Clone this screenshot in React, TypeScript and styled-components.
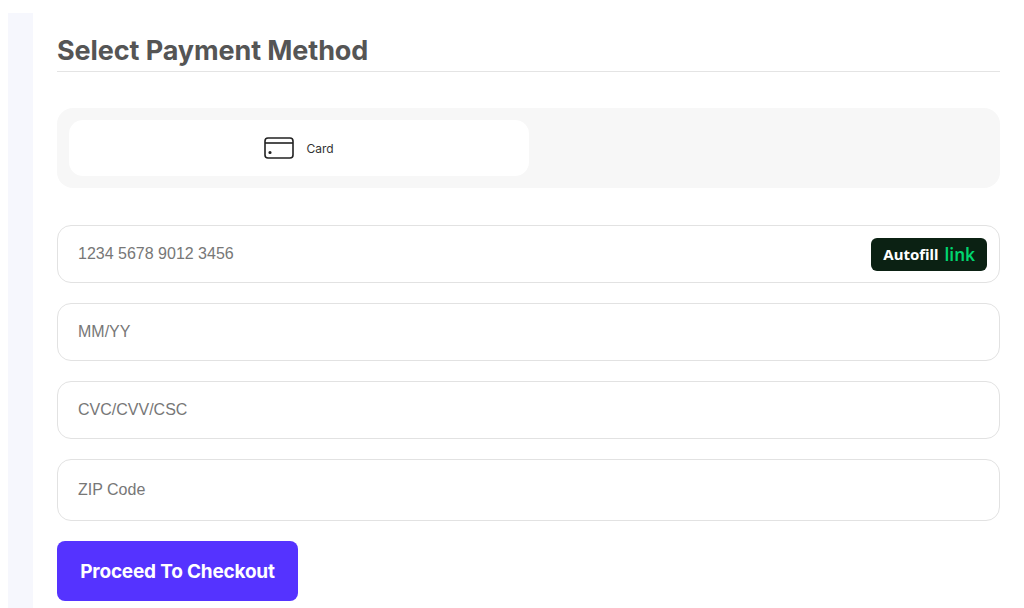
import React from "react";
import styled, { createGlobalStyle } from "styled-components";

const Global = createGlobalStyle`
  html, body { margin: 0; padding: 0; background: #fff; font-family: Inter, "Liberation Sans", sans-serif; }
`;

const Page = styled.div`
  display: flex;
  height: 608px;
  overflow: hidden;
  padding-top: 13px;
  box-sizing: border-box;
`;

const Side = styled.div`
  width: 25px;
  margin-left: 8px;
  background: #f6f7fd;
  flex-shrink: 0;
`;

const Main = styled.div`
  width: 943px;
  margin-left: 24px;
  display: flex;
  flex-direction: column;
`;

const Title = styled.h2`
  margin: 0;
  padding-top: 22px;
  padding-bottom: 4px;
  font-size: 27px;
  font-weight: 700;
  letter-spacing: -0.1px;
  color: #555;
  border-bottom: 1px solid #e4e4e4;
  line-height: 32px;
`;

const Tabs = styled.div`
  margin-top: 36px;
  background: #f7f7f7;
  border-radius: 16px;
  padding: 12px;
  height: 56px;
  display: flex;
`;

const Tab = styled.div`
  width: 460px;
  background: #fff;
  border-radius: 14px;
  display: flex;
  align-items: center;
  justify-content: center;
  gap: 12px;
  font-size: 12px;
  color: #333;
`;

const Form = styled.div`
  margin-top: 37px;
  display: flex;
  flex-direction: column;
  gap: 20px;
`;

const Field = styled.div<{ $h?: number }>`
  height: ${(p) => p.$h ?? 58}px;
  box-sizing: border-box;
  border: 1px solid #e2e2e2;
  border-radius: 14px;
  display: flex;
  align-items: center;
  padding: 0 12px 0 20px;
  font-family: "Liberation Sans", Arial, sans-serif;
  font-size: 16px;
  color: #777;
`;

const Placeholder = styled.span`
  flex: 1;
`;

const Badge = styled.div`
  background: #0b2113;
  border-radius: 6px;
  height: 33px;
  padding: 0 12px;
  display: flex;
  align-items: center;
  gap: 6px;
  font-family: "Noto Sans", sans-serif;
  font-weight: 700;
  font-size: 15px;
  color: #fff;
`;

const Green = styled.span`
  color: #00d66f;
  font-size: 17px;
  font-weight: 600;
`;

const Button = styled.button`
  margin-top: 20px;
  align-self: flex-start;
  width: 241px;
  height: 60px;
  border: none;
  border-radius: 8px;
  background: #5533ff;
  color: #fff;
  font-family: Inter, sans-serif;
  font-weight: 700;
  font-size: 19px;
  letter-spacing: -0.2px;
`;

export default function App() {
  return (
    <>
      <Global />
      <Page>
        <Side />
        <Main>
          <Title>Select Payment Method</Title>
          <Tabs>
            <Tab>
              <svg width="30" height="22" viewBox="0 0 30 22" fill="none" stroke="#222" strokeWidth="1.6">
                <rect x="1" y="1" width="28" height="20" rx="3" />
                <line x1="1" y1="6" x2="29" y2="6" />
                <circle cx="6" cy="15.5" r="0.8" fill="#222" />
              </svg>
              Card
            </Tab>
          </Tabs>
          <Form>
            <Field>
              <Placeholder>1234 5678 9012 3456</Placeholder>
              <Badge>Autofill <Green>link</Green></Badge>
            </Field>
            <Field>MM/YY</Field>
            <Field>CVC/CVV/CSC</Field>
            <Field $h={62}>ZIP Code</Field>
          </Form>
          <Button>Proceed To Checkout</Button>
        </Main>
      </Page>
    </>
  );
}
